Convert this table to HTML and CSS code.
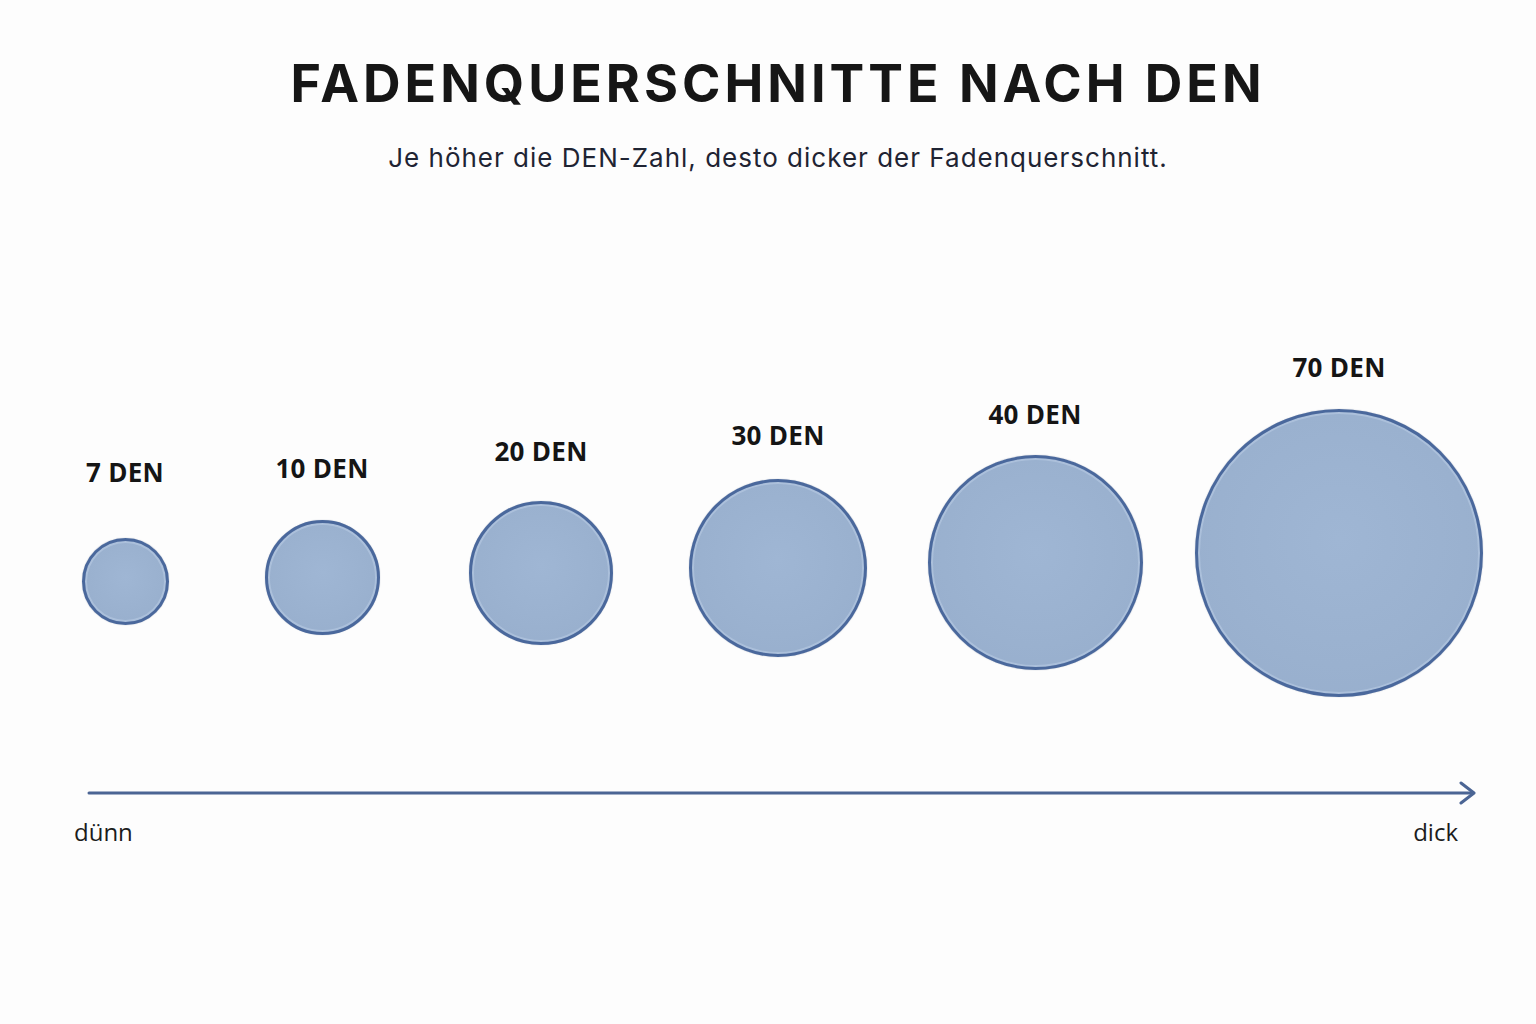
FILE: index.html
```html
<!DOCTYPE html>
<html lang="de">
<head>
<meta charset="utf-8">
<title>Fadenquerschnitte nach DEN</title>
<link rel="stylesheet" href="styles.css">
</head>
<body>
<main class="page">
  <header class="head">
    <h1 class="title">FADENQUERSCHNITTE NACH DEN</h1>
    <p class="subtitle">Je höher die DEN-Zahl, desto dicker der Fadenquerschnitt.</p>
  </header>

  <section class="chart">
    <div class="item d7"><span class="label">7 DEN</span><span class="circle"></span></div>
    <div class="item d10"><span class="label">10 DEN</span><span class="circle"></span></div>
    <div class="item d20"><span class="label">20 DEN</span><span class="circle"></span></div>
    <div class="item d30"><span class="label">30 DEN</span><span class="circle"></span></div>
    <div class="item d40"><span class="label">40 DEN</span><span class="circle"></span></div>
    <div class="item d70"><span class="label">70 DEN</span><span class="circle"></span></div>
  </section>

  <section class="axis">
    <svg class="arrow" width="1536" height="24" viewBox="0 0 1536 24" aria-hidden="true">
      <line x1="89" y1="12" x2="1473" y2="12" stroke="#4b6594" stroke-width="3" stroke-linecap="round"/>
      <polyline points="1461,2 1474,12 1461,22" fill="none" stroke="#4b6594" stroke-width="3" stroke-linecap="round" stroke-linejoin="round"/>
    </svg>
    <div class="ends">
      <span class="end">dünn</span>
      <span class="end">dick</span>
    </div>
  </section>
</main>
</body>
</html>
```

FILE: styles.css
```css
* { box-sizing: border-box; }

html, body {
  margin: 0;
  padding: 0;
  background: #fdfdfd;
}

.page {
  width: 1536px;
  height: 1024px;
  overflow: hidden;
}

.head {
  padding-top: 53px;
  padding-left: 20px;
  text-align: center;
}

.title {
  margin: 0;
  font-family: Inter, "Liberation Sans", sans-serif;
  font-weight: 700;
  font-size: 52px;
  line-height: 62px;
  letter-spacing: 4px;
  color: #161616;
}

.subtitle {
  margin: 28px 0 0;
  font-family: Inter, "Liberation Sans", sans-serif;
  font-weight: 400;
  font-size: 26px;
  line-height: 30px;
  letter-spacing: 1px;
  color: #1f2433;
}

.chart {
  margin-top: 178px;
  padding-left: 20px;
  display: grid;
  grid-template-columns: 210px 184px 254px 220px 294px 314px;
  align-items: start;
}

.item {
  display: flex;
  flex-direction: column;
  align-items: center;
  padding-top: var(--top);
}

.label {
  font-family: "Open Sans", "Noto Sans", sans-serif;
  font-weight: 700;
  font-size: 26px;
  line-height: 32px;
  letter-spacing: 0.3px;
  color: #151515;
  white-space: nowrap;
}

.circle {
  display: block;
  width: var(--d);
  height: var(--d);
  margin-top: var(--gap);
  border-radius: 50%;
  background: radial-gradient(circle at 50% 45%, #9fb6d4 0%, #9ab1cf 60%, #96adcc 100%);
  border: 3.5px solid #4a689c;
  box-shadow: inset 0 0 0 2px rgba(190, 208, 232, 0.5), 0 0 1px rgba(40, 60, 100, 0.5);
}

.d7  { --top: 105px; --gap: 50px; --d: 87px; }
.d10 { --top: 101px; --gap: 36px; --d: 115px; }
.d20 { --top: 84px;  --gap: 34px; --d: 144px; }
.d30 { --top: 68px;  --gap: 28px; --d: 178px; }
.d40 { --top: 47px;  --gap: 25px; --d: 215px; }
.d70 { --top: 0px;   --gap: 26px; --d: 288px; }

.axis {
  margin-top: 84px;
}

.arrow {
  display: block;
}

.ends {
  margin-top: 11px;
  display: flex;
  justify-content: space-between;
  padding: 0 78px 0 74px;
}

.end {
  font-family: "Open Sans", "Noto Sans", sans-serif;
  font-size: 24px;
  line-height: 32px;
  color: #1c1c1c;
}
```
